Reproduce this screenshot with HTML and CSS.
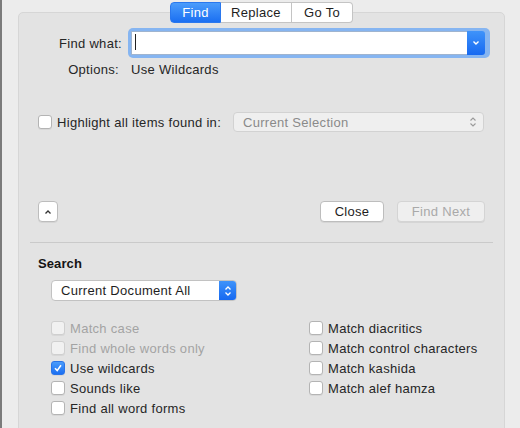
FILE: index.html
```html
<!DOCTYPE html>
<html>

<head>
    <title>Find and Replace</title>
    <link rel="stylesheet" href="styles.css">
</head>

<body>
    <div class="tabs">
        <span class="tab tab-active tab-find">Find</span>
        <span class="tab tab-replace">Replace</span>
        <span class="tab tab-goto">Go To</span>
    </div>
    <div class="panel">
        <div class="form-row find-row">
            <label class="row-label">Find what:</label>
            <div class="combo">
                <div class="combo-field"><span class="caret"></span></div>
                <div class="combo-button">
                    <svg width="8" height="6" viewBox="0 0 8 6"><path d="M1.5 1.5 L4 4 L6.5 1.5" fill="none" stroke="#fff" stroke-width="1.4"/></svg>
                </div>
            </div>
        </div>
        <div class="form-row options-row">
            <span class="row-label options-label">Options:</span>
            <span class="options-value">Use Wildcards</span>
        </div>

        <div class="highlight-row">
            <span class="check"></span>
            <span class="check-label">Highlight all items found in:</span>
            <div class="popup popup-disabled">
                <span>Current Selection</span>
                <svg class="updown" width="8" height="12" viewBox="0 0 8 12"><path d="M1.5 4.5 L4 2 L6.5 4.5 M1.5 7.5 L4 10 L6.5 7.5" fill="none" stroke="#9a9a9a" stroke-width="1.1"/></svg>
            </div>
        </div>

        <div class="button-row">
            <button class="btn btn-more">
                <svg width="8" height="6" viewBox="0 0 8 6"><path d="M1.5 4.5 L4 2 L6.5 4.5" fill="none" stroke="#333" stroke-width="1.3"/></svg>
            </button>
            <button class="btn btn-close">Close</button>
            <button class="btn btn-next" disabled>Find Next</button>
        </div>

        <div class="separator"></div>

        <h2 class="section-title">Search</h2>
        <div class="popup popup-search">
            <span>Current Document All</span>
            <div class="popup-arrows">
                <svg width="8" height="12" viewBox="0 0 8 12"><path d="M1.5 4.5 L4 2 L6.5 4.5 M1.5 7.5 L4 10 L6.5 7.5" fill="none" stroke="#fff" stroke-width="1.3"/></svg>
            </div>
        </div>

        <div class="search-options">
            <div class="option-column left-column">
                <div class="option disabled"><span class="check"></span>Match case</div>
                <div class="option disabled"><span class="check"></span>Find whole words only</div>
                <div class="option"><span class="check checked">
                    <svg width="10" height="10" viewBox="0 0 10 10"><path d="M2 5.2 L4.2 7.6 L8 2.2" fill="none" stroke="#fff" stroke-width="1.6"/></svg>
                </span>Use wildcards</div>
                <div class="option"><span class="check"></span>Sounds like</div>
                <div class="option"><span class="check"></span>Find all word forms</div>
            </div>
            <div class="option-column">
                <div class="option"><span class="check"></span>Match diacritics</div>
                <div class="option"><span class="check"></span>Match control characters</div>
                <div class="option"><span class="check"></span>Match kashida</div>
                <div class="option"><span class="check"></span>Match alef hamza</div>
            </div>
        </div>
    </div>
</body>

</html>
```

FILE: styles.css
```css
body {
    margin: 0;
    height: 428px;
    overflow: hidden;
    background-color: #ececec;
    border-left: 2px solid #7b7b7b;
    font-family: 'Liberation Sans', Arial, sans-serif;
    font-size: 13px;
    letter-spacing: 0.3px;
    color: #262626;
}

/* segmented control on top of the panel */
.tabs {
    display: flex;
    margin: 2px 0 0 168px;
    height: 21px;
    position: relative;
    z-index: 1;
}

.tab {
    box-sizing: border-box;
    height: 21px;
    line-height: 19px;
    text-align: center;
    background-color: #ffffff;
    border: 1px solid #c4c4c4;
    border-left: none;
    color: #1e1e1e;
}

.tab-find {
    width: 51px;
    border-radius: 4px 0 0 4px;
    border: 1px solid #2a78ee;
}

.tab-replace {
    width: 71px;
}

.tab-goto {
    width: 61px;
    border-radius: 0 4px 4px 0;
}

.tab-active {
    background: linear-gradient(#4a9cfb, #1b6ff2);
    color: #ffffff;
}

.panel {
    box-sizing: border-box;
    width: 487px;
    height: 430px;
    margin: -11px 0 0 16px;
    padding-top: 15px;
    background-color: #e3e3e3;
    border: 1px solid #d6d6d6;
    border-radius: 5px;
}

.form-row {
    display: grid;
    grid-template-columns: 103px 362px;
    column-gap: 6px;
    align-items: center;
}

.row-label {
    text-align: right;
}

.combo {
    box-sizing: border-box;
    height: 30px;
    padding: 3px 5px 3px 3px;
    display: flex;
    background-color: #86b5f1;
    border-radius: 5px;
}

.combo-field {
    flex: 1;
    background-color: #ffffff;
    border: 1px solid #9fb4cf;
    border-right: none;
    position: relative;
}

.caret {
    position: absolute;
    left: 3px;
    top: 2px;
    width: 1px;
    height: 16px;
    background-color: #222;
}

.combo-button {
    width: 18px;
    display: flex;
    align-items: center;
    justify-content: center;
    background: linear-gradient(#3f93fa, #1669f1);
    border-radius: 0 3px 3px 0;
}

.options-row {
    margin-top: 4px;
    line-height: 16px;
}

.options-label {
    padding-right: 3px;
}

.options-value {
    padding-left: 3px;
}

.highlight-row {
    display: flex;
    align-items: center;
    height: 20px;
    margin: 34px 20px 0 19px;
}

.check {
    box-sizing: border-box;
    width: 14px;
    height: 14px;
    flex: none;
    margin-right: 5px;
    background-color: #ffffff;
    border: 1px solid #b4b4b4;
    border-radius: 3px;
    box-shadow: 0 1px 0 rgba(0, 0, 0, 0.05);
    display: flex;
    align-items: center;
    justify-content: center;
}

.check.checked {
    background: linear-gradient(#4a9cfb, #1b6ff2);
    border-color: #2a74e8;
}

.popup {
    box-sizing: border-box;
    display: flex;
    align-items: center;
    border-radius: 4px;
}

.popup-disabled {
    margin-left: auto;
    width: 251px;
    height: 20px;
    padding: 0 6px 0 9px;
    background-color: #efefef;
    border: 1px solid #d2d2d2;
    color: #8a8a8a;
    justify-content: space-between;
}

.button-row {
    display: flex;
    align-items: center;
    margin: 69px 19px 0 19px;
}

.btn {
    box-sizing: border-box;
    height: 21px;
    padding: 0;
    font-family: inherit;
    font-size: 13px;
    letter-spacing: inherit;
    color: #1e1e1e;
    background-color: #ffffff;
    border: 1px solid #bdbdbd;
    border-radius: 4px;
    box-shadow: 0 1px 0 rgba(0, 0, 0, 0.06);
}

.btn-more {
    width: 20px;
    display: flex;
    align-items: center;
    justify-content: center;
}

.btn-close {
    width: 64px;
    margin-left: auto;
}

.btn-next {
    width: 88px;
    margin-left: 13px;
    background-color: #efefef;
    border-color: #d4d4d4;
    color: #a9a9a9;
}

.separator {
    height: 1px;
    margin: 20px 11px 0 11px;
    background-color: #cacaca;
}

.section-title {
    margin: 13px 0 0 19px;
    font-size: 13px;
    line-height: 16px;
    font-weight: bold;
    letter-spacing: 0.1px;
    color: #141414;
}

.popup-search {
    width: 186px;
    height: 21px;
    margin: 8px 0 0 32px;
    padding-left: 9px;
    background-color: #ffffff;
    border: 1px solid #c2c2c2;
    color: #1e1e1e;
    overflow: hidden;
}

.popup-search span {
    flex: 1;
}

.popup-arrows {
    width: 17px;
    height: 100%;
    display: flex;
    align-items: center;
    justify-content: center;
    background: linear-gradient(#3f93fa, #1669f1);
}

.search-options {
    display: flex;
    margin: 17px 0 0 32px;
}

.left-column {
    width: 258px;
}

.option {
    display: flex;
    align-items: center;
    height: 20px;
}

.option.disabled {
    color: #a3a3a3;
}

.option.disabled .check {
    background-color: #f1f1f1;
    border-color: #cfcfcf;
}
```
